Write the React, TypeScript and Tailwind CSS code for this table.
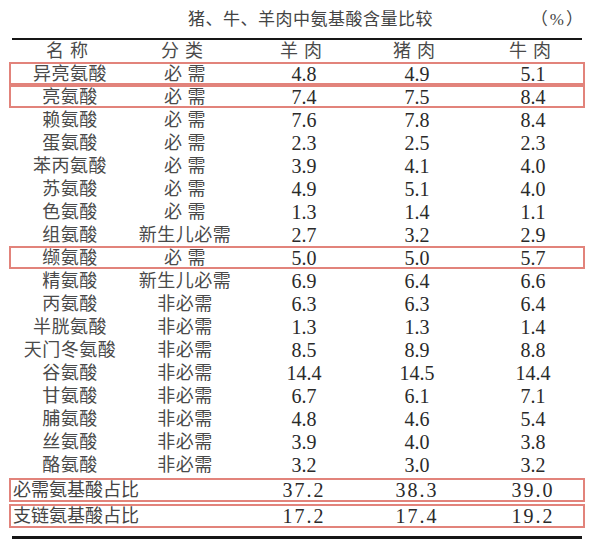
const FONT = { fontFamily: '"Liberation Serif", "Noto Sans CJK SC", serif' };

type Row = { name: string; kind: string; yang: string; zhu: string; niu: string; marked?: boolean };

const ROWS: Row[] = [
  { name: "异亮氨酸", kind: "必 需", yang: "4.8", zhu: "4.9", niu: "5.1", marked: true },
  { name: "亮氨酸", kind: "必 需", yang: "7.4", zhu: "7.5", niu: "8.4", marked: true },
  { name: "赖氨酸", kind: "必 需", yang: "7.6", zhu: "7.8", niu: "8.4" },
  { name: "蛋氨酸", kind: "必 需", yang: "2.3", zhu: "2.5", niu: "2.3" },
  { name: "苯丙氨酸", kind: "必 需", yang: "3.9", zhu: "4.1", niu: "4.0" },
  { name: "苏氨酸", kind: "必 需", yang: "4.9", zhu: "5.1", niu: "4.0" },
  { name: "色氨酸", kind: "必 需", yang: "1.3", zhu: "1.4", niu: "1.1" },
  { name: "组氨酸", kind: "新生儿必需", yang: "2.7", zhu: "3.2", niu: "2.9" },
  { name: "缬氨酸", kind: "必 需", yang: "5.0", zhu: "5.0", niu: "5.7", marked: true },
  { name: "精氨酸", kind: "新生儿必需", yang: "6.9", zhu: "6.4", niu: "6.6" },
  { name: "丙氨酸", kind: "非必需", yang: "6.3", zhu: "6.3", niu: "6.4" },
  { name: "半胱氨酸", kind: "非必需", yang: "1.3", zhu: "1.3", niu: "1.4" },
  { name: "天门冬氨酸", kind: "非必需", yang: "8.5", zhu: "8.9", niu: "8.8" },
  { name: "谷氨酸", kind: "非必需", yang: "14.4", zhu: "14.5", niu: "14.4" },
  { name: "甘氨酸", kind: "非必需", yang: "6.7", zhu: "6.1", niu: "7.1" },
  { name: "脯氨酸", kind: "非必需", yang: "4.8", zhu: "4.6", niu: "5.4" },
  { name: "丝氨酸", kind: "非必需", yang: "3.9", zhu: "4.0", niu: "3.8" },
  { name: "酪氨酸", kind: "非必需", yang: "3.2", zhu: "3.0", niu: "3.2" },
];

const SUMMARY = [
  { label: "必需氨基酸占比", yang: "37.2", zhu: "38.3", niu: "39.0" },
  { label: "支链氨基酸占比", yang: "17.2", zhu: "17.4", niu: "19.2" },
];

const GRID = "grid grid-cols-[118px_112px_126px_100px_125px] items-center";

export default function App() {
  return (
    <div className="h-[550px] w-[602px] bg-white text-[#2a2a2a]" style={FONT}>
      <div className="flex h-[38px] items-center pt-[2px]">
        <span className="ml-[188px] text-[17px] tracking-[0.5px] text-[#444]">猪、牛、羊肉中氨基酸含量比较</span>
        <span className="ml-auto mr-[17px] text-[17px] tracking-[2px] text-[#444]">（%）</span>
      </div>

      <div className="w-[585px] pl-[9px]">
        <div className="mx-[3px] h-[2px] bg-[#161616]" />

        <div className={`${GRID} h-[22px] border-x-2 border-transparent text-[18px] leading-none text-[#4a4a4a]`}>
          <span className="text-center tracking-[6px]">名称</span>
          <span className="text-center tracking-[6px]">分类</span>
          <span className="text-center tracking-[6px]">羊肉</span>
          <span className="text-center tracking-[6px]">猪肉</span>
          <span className="pl-[7px] text-center tracking-[6px]">牛肉</span>
        </div>

        <div className="flex flex-col">
          {ROWS.map((row) => (
            <div
              key={row.name}
              className={`${GRID} h-[23px] border-2 ${row.marked ? "border-[#e2837b]" : "border-transparent"}`}
            >
              <span className="text-center text-[18px] leading-none tracking-[0.5px] text-[#4a4a4a]">{row.name}</span>
              <span className="text-center text-[18px] leading-none tracking-[0.5px] text-[#4a4a4a]">{row.kind}</span>
              <span className="text-center text-[20px] leading-none">{row.yang}</span>
              <span className="text-center text-[20px] leading-none">{row.zhu}</span>
              <span className="pl-[7px] text-center text-[20px] leading-none">{row.niu}</span>
            </div>
          ))}
        </div>

        <div className="mt-[2px] flex flex-col gap-[2px]">
          {SUMMARY.map((row) => (
            <div key={row.label} className={`${GRID} h-[24px] border-2 border-[#e2837b]`}>
              <span className="col-span-2 pl-[2px] text-[18px] leading-none text-[#444]">{row.label}</span>
              <span className="text-center text-[20px] leading-none tracking-[2px]">{row.yang}</span>
              <span className="text-center text-[20px] leading-none tracking-[2px]">{row.zhu}</span>
              <span className="pl-[7px] text-center text-[20px] leading-none tracking-[2px]">{row.niu}</span>
            </div>
          ))}
        </div>

        <div className="mx-[3px] mt-[8px] h-[3px] bg-[#161616]" />
      </div>
    </div>
  );
}
